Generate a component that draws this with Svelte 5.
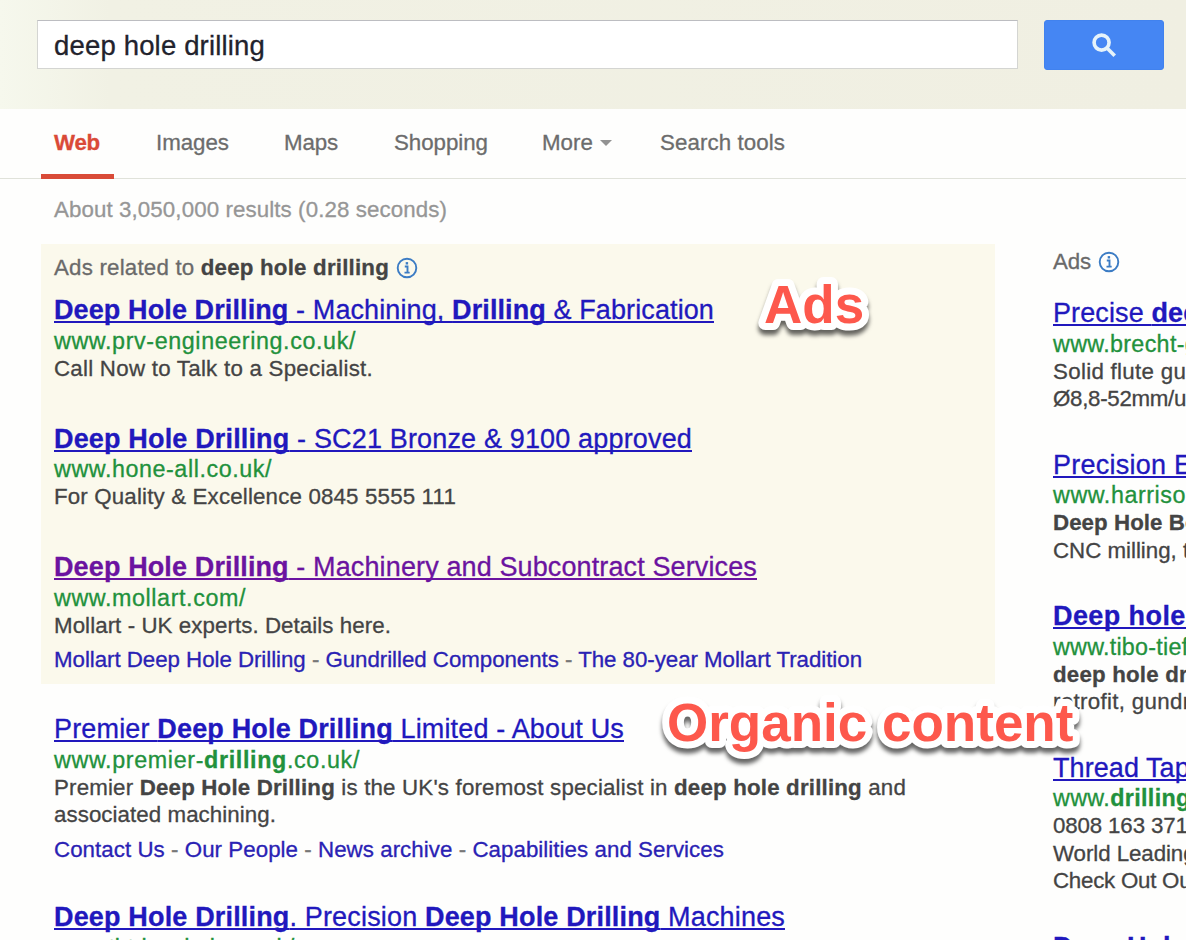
<script>
    import { onMount } from "svelte"

    const tabs = [
        { label: "Web", width: 46, gap: 56, active: true },
        { label: "Images", width: 73, gap: 55 },
        { label: "Maps", width: 54, gap: 56 },
        { label: "Shopping", width: 94, gap: 54 },
        { label: "More", width: 51, gap: 48, menu: true },
        { label: "Search tools", width: 125, gap: 0 },
    ]

    // Text between asterisks is the matched part of the query and is drawn bold
    const ads = [
        {
            title: ["*Deep Hole Drilling* - Machining, *Drilling* & Fabrication", 660],
            url: ["www.prv-engineering.co.uk/", 302],
            lines: [["Call Now to Talk to a Specialist.", 319]],
        },
        {
            title: ["*Deep Hole Drilling* - SC21 Bronze & 9100 approved", 638],
            url: ["www.hone-all.co.uk/", 218],
            lines: [["For Quality & Excellence 0845 5555 111", 402]],
        },
        {
            title: ["*Deep Hole Drilling* - Machinery and Subcontract Services", 703],
            visited: true,
            url: ["www.mollart.com/", 192],
            lines: [["Mollart - UK experts. Details here.", 337]],
            links: [["Mollart Deep Hole Drilling", "Gundrilled Components", "The 80-year Mollart Tradition"], 808],
        },
    ]

    const organic = [
        {
            title: ["Premier *Deep Hole Drilling* Limited - About Us", 570],
            url: ["www.premier-*drilling*.co.uk/", 306],
            lines: [
                ["Premier *Deep Hole Drilling* is the UK's foremost specialist in *deep hole drilling* and", 852],
                ["associated machining.", 222],
            ],
            links: [["Contact Us", "Our People", "News archive", "Capabilities and Services"], 670],
        },
        {
            title: ["*Deep Hole Drilling*. Precision *Deep Hole Drilling* Machines", 731],
            url: ["www.tbtdeephole.co.uk/", 240],
            lines: [],
        },
    ]

    const sideAds = [
        {
            title: ["Precise *deep hole* drilling", 312],
            url: ["www.brecht-gmbh.com/", 250],
            lines: [["Solid flute gun drills", 200], ["Ø8,8-52mm/up to 3000mm", 260]],
        },
        {
            title: ["Precision Engineering", 268],
            url: ["www.harrison-eng.co.uk/", 268],
            lines: [["*Deep Hole Boring*", 188], ["CNC milling, turning", 198]],
        },
        {
            title: ["*Deep hole drilling*", 234],
            url: ["www.tibo-tiefbohr.com/", 240],
            lines: [["*deep hole drilling*", 188], ["retrofit, gundrilling", 184]],
        },
        {
            title: ["Thread Taps & Drills", 244],
            url: ["www.*drilling*-tools.co.uk/", 268],
            lines: [["0808 163 3710", 147], ["World Leading Tools", 200], ["Check Out Our Range", 216]],
        },
        {
            title: ["*Deep Hole Drilling*", 234],
            url: ["www.deephole.co.uk/", 220],
            lines: [],
        },
    ]

    function parts(text) {
        return text.split("*").map((value, i) => ({ value, bold: i % 2 === 1 }))
    }

    // Spread the letters so that a line takes up the given width
    function fit(node, width) {
        const natural = node.getBoundingClientRect().width
        const count = node.textContent.length
        node.style.letterSpacing = `${(width - natural) / count}px`
    }

    onMount(() => {
        document.title = "deep hole drilling"
    })
</script>

{#snippet rich([text, width])}
    <span class="fit" use:fit={width}>{#each parts(text) as part}{#if part.bold}<b>{part.value}</b>{:else}{part.value}{/if}{/each}</span>
{/snippet}

{#snippet info()}
    <svg class="info" viewBox="0 0 22 22" aria-hidden="true">
        <circle cx="11" cy="11" r="9.3" />
        <path d="M8.8 9.5h2.7v5.8M8.5 15.6h5.2" />
        <rect x="9.7" y="5.1" width="2.4" height="2.4" />
    </svg>
{/snippet}

{#snippet result(item)}
    <article class="result">
        <h3><a href="#top" class:visited={item.visited}>{@render rich(item.title)}</a></h3>
        <cite>{@render rich(item.url)}</cite>
        {#each item.lines as line}
            <p>{@render rich(line)}</p>
        {/each}
        {#if item.links}
            <p class="links">
                <span class="fit" use:fit={item.links[1]}>{#each item.links[0] as link, i}{#if i}{" - "}{/if}<a href="#top">{link}</a>{/each}</span>
            </p>
        {/if}
    </article>
{/snippet}

<div class="page">
    <header>
        <div class="box"><span class="fit" use:fit={211}>deep hole drilling</span></div>
        <button aria-label="Search">
            <svg viewBox="0 0 24 24" aria-hidden="true">
                <circle cx="9.2" cy="9.2" r="7.2" />
                <path d="M14.4 14.4l7.4 7.4" />
            </svg>
        </button>
    </header>

    <nav>
        {#each tabs as tab}
            <div class="tab" class:active={tab.active} style="margin-right: {tab.gap}px">
                <span style="width: {tab.width}px"><span class="fit" use:fit={tab.width}>{tab.label}</span></span>
                {#if tab.menu}<i class="caret"></i>{/if}
            </div>
        {/each}
    </nav>

    <div class="stats"><span class="fit" use:fit={393}>About 3,050,000 results (0.28 seconds)</span></div>

    <div class="columns">
        <main>
            <section class="sponsored">
                <div class="label">
                    <span class="fit" use:fit={335}>Ads related to <b>deep hole drilling</b></span>
                    {@render info()}
                </div>
                {#each ads as item}
                    {@render result(item)}
                {/each}
            </section>
            <section class="organic">
                {#each organic as item}
                    {@render result(item)}
                {/each}
            </section>
        </main>
        <aside>
            <div class="label">
                <span class="fit" use:fit={38}>Ads</span>
                {@render info()}
            </div>
            {#each sideAds as item}
                {@render result(item)}
            {/each}
        </aside>
    </div>

    <svg class="note note-ads" width="140" height="90">
        <text x="14" y="53">Ads</text>
    </svg>
    <svg class="note note-organic" width="450" height="100">
        <text x="17" y="51">Organic content</text>
    </svg>
</div>

<style>
    :global(body) {
        margin: 0;
        background: #fefefd;
    }
    .page {
        position: relative;
        width: 1186px;
        height: 940px;
        overflow: hidden;
        background: #fefefd;
        font-family: "Liberation Sans", Arial, sans-serif;
        font-size: 22.3px;
        color: #444;
        -webkit-text-stroke: 0.3px;
    }
    .fit {
        display: inline-block;
        white-space: pre;
    }
    header {
        box-sizing: border-box;
        height: 109px;
        padding: 20px 22px 0 37px;
        display: flex;
        justify-content: space-between;
        align-items: flex-start;
        background: linear-gradient(90deg, #f6f8ed 0, #f1f1e4 110px, #f0efe2 100%);
    }
    .box {
        box-sizing: border-box;
        width: 981px;
        height: 49px;
        padding-left: 16px;
        border: 1px solid #d4d5d2;
        border-top-color: #bcbdc1;
        background: #fff;
        color: #22222c;
        font-size: 27.5px;
        line-height: 50px;
    }
    button {
        width: 120px;
        height: 50px;
        padding: 0;
        border: 1px solid #4182ee;
        border-radius: 3px;
        background: #4586f3;
    }
    button svg {
        display: block;
        width: 25px;
        height: 25px;
        margin: 0 auto;
        fill: none;
        stroke: #e6f3fa;
        stroke-width: 3.5;
    }
    nav {
        box-sizing: border-box;
        height: 70px;
        padding-left: 54px;
        display: flex;
        border-bottom: 1px solid #e0e2da;
        line-height: 68px;
        color: #6c6c6c;
    }
    .tab {
        position: relative;
        display: flex;
        align-items: center;
        height: 67px;
        white-space: nowrap;
    }
    .active {
        color: #da4a38;
        font-weight: bold;
    }
    .active::after {
        content: "";
        position: absolute;
        left: -13px;
        right: -14px;
        top: 65px;
        height: 5px;
        background: #d94b38;
    }
    .caret {
        margin-left: 7px;
        border: 6px solid transparent;
        border-top-color: #929292;
        border-bottom: 0;
    }
    .stats {
        height: 65px;
        padding-left: 54px;
        line-height: 62px;
        color: #969696;
    }
    .columns {
        display: flex;
    }
    main {
        width: 954px;
        padding-left: 41px;
        flex: none;
    }
    .sponsored {
        box-sizing: border-box;
        height: 440px;
        padding: 8px 13px 0;
        background: #fbf9ec;
    }
    .organic {
        padding: 28px 13px 0;
    }
    aside {
        padding: 4px 0 0 58px;
        flex: none;
    }
    .label {
        display: flex;
        align-items: center;
        gap: 7px;
        height: 31px;
        margin-bottom: 10px;
        color: #6a6a6a;
    }
    .label b {
        color: #444;
    }
    aside .label {
        height: 28px;
        margin-bottom: 20px;
    }
    .info {
        width: 22px;
        height: 22px;
        fill: none;
        stroke: #3c7cc4;
        stroke-width: 1.9;
    }
    .info rect {
        fill: #3c7cc4;
        stroke: none;
    }
    .result {
        margin-bottom: 39.6px;
    }
    .organic .result {
        margin-bottom: 37px;
    }
    h3 {
        margin: 0;
        height: 33.5px;
        font-size: 27px;
        font-weight: normal;
        line-height: 34px;
    }
    h3 a {
        color: #2118bd;
    }
    h3 .fit,
    h3 :global(.fit) {
        text-decoration: underline;
        text-decoration-thickness: 2px;
        text-underline-offset: 2px;
        text-decoration-skip-ink: none;
    }
    h3 a.visited {
        color: #6b13a0;
    }
    cite {
        display: block;
        height: 28px;
        font-size: 23.3px;
        font-style: normal;
        line-height: 28px;
        color: #22913c;
    }
    p {
        margin: 0;
        height: 27.5px;
        line-height: 28px;
    }
    .links {
        margin-top: 7px;
        color: #777;
    }
    .links a {
        color: #2a22b4;
        text-decoration: none;
    }
    aside .result {
        margin-bottom: 35px;
    }
    .note {
        position: absolute;
        overflow: visible;
        font-size: 53px;
        font-weight: bold;
        filter: drop-shadow(0 5px 2px rgba(0, 0, 0, 0.6));
    }
    .note text {
        fill: #fd584c;
        stroke: #fff;
        stroke-width: 14px;
        stroke-linejoin: round;
        paint-order: stroke;
    }
    .note-ads {
        left: 750px;
        top: 270px;
    }
    .note-organic {
        left: 650px;
        top: 690px;
    }
</style>
